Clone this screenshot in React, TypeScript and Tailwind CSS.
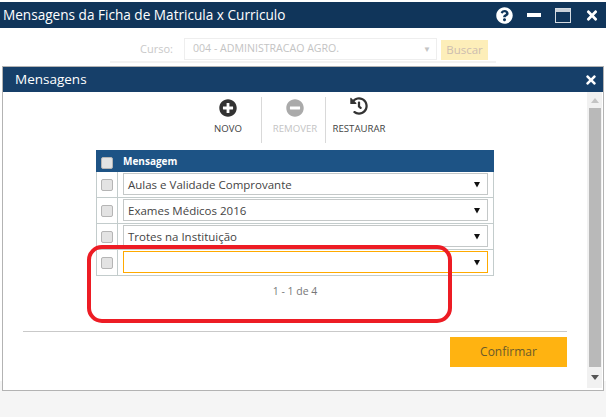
import { FaPlusCircle, FaMinusCircle, FaHistory, FaQuestionCircle, FaTimes } from "react-icons/fa"

const rows = ["Aulas e Validade Comprovante", "Exames Médicos 2016", "Trotes na Instituição", ""]

const Check = () => (
  <span className="block w-[12px] h-[12px] rounded-[2px] border border-[#b5b5b5] bg-[#e3e3e3]" />
)

const Arrow = () => (
  <svg width="8" height="7" viewBox="0 0 8 7" className="shrink-0">
    <path d="M1 1h6L4 6.5z" fill="#111" />
  </svg>
)

const App = () => {
  return (
    <div className="relative w-[606px] h-[417px] overflow-hidden bg-white font-['Open_Sans',sans-serif]">
      <div className="pt-[2px]">
        <div className="h-[26px] bg-[#10355a] flex items-center pl-[3px] pr-[8px] text-white">
          <span className="text-[13.6px] flex-1 whitespace-nowrap">Mensagens da Ficha de Matricula x Curriculo</span>
          <FaQuestionCircle className="w-[17px] h-[17px]" />
          <span className="ml-[14px] w-[14px] h-[4px] bg-white" />
          <svg width="16" height="15" viewBox="0 0 16 15" className="ml-[14px]">
            <rect x="0.5" y="0.5" width="15" height="14" fill="none" stroke="#d5dbe2" />
            <rect x="1" y="1" width="14" height="3" fill="#c9d0d8" />
          </svg>
          <FaTimes className="ml-[15px] w-[12px] h-[15px]" />
        </div>
        <div className="mt-[10px] mx-[110px] h-[25px] border-b-[2px] border-[#f2f2f2] flex items-start">
          <span className="ml-[30px] mt-[3px] w-[44px] text-[11px] text-[#c9c9c9]">Curso:</span>
          <div className="w-[253px] h-[22px] border border-[#eeeeee] flex items-center pl-[8px] pr-[5px] text-[10.6px] text-[#c4c4c4]">
            <span className="flex-1">004 - ADMINISTRACAO AGRO.</span>
            <span className="text-[8px] text-[#c4c4c4]">▼</span>
          </div>
          <div className="ml-[4px] mt-[2px] w-[47px] h-[20px] bg-[#fdeeb9] flex items-center justify-center text-[11.5px] text-[#cdbdb0]">Buscar</div>
        </div>
        <div className="absolute left-0 right-0 top-[381px] bottom-0 bg-[#f5f5f5]" />
      </div>

      {/* modal */}
      <div className="absolute left-[2px] top-[66px] w-[602px] h-[325px] border border-[#b3b3b3] bg-white flex flex-col">
        <div className="h-[25px] bg-[#163f69] flex items-center pl-[12px] pr-[6px] text-white shrink-0">
          <span className="text-[13.5px] flex-1">Mensagens</span>
          <FaTimes className="w-[12px] h-[14px]" />
        </div>
        <div className="flex-1 flex min-h-0">
          <div className="flex-1 flex flex-col">
            <div className="mt-[5px] h-[46px] flex justify-center pr-[6px]">
              <div className="w-[66px] flex flex-col items-center text-[9.6px] text-[#444]">
                <FaPlusCircle className="w-[18px] h-[18px] mt-[2px] text-[#333]" />
                <span className="mt-[5px]">NOVO</span>
              </div>
              <div className="w-[64px] pl-[3px] border-l border-[#d9d9d9] flex flex-col items-center text-[9.6px] text-[#c4c4c4]">
                <FaMinusCircle className="w-[18px] h-[18px] mt-[2px] text-[#aaaaaa]" />
                <span className="mt-[5px] whitespace-nowrap">REMOVER</span>
              </div>
              <div className="w-[64px] pl-[3px] border-l border-[#d9d9d9] flex flex-col items-center text-[9.6px] text-[#444]">
                <FaHistory className="w-[18px] h-[18px] text-[#333]" />
                <span className="mt-[7px] whitespace-nowrap">RESTAURAR</span>
              </div>
            </div>
            <div className="mt-[7px] ml-[93px] w-[398px]">
              <div className="h-[22px] bg-[#1d5385] flex items-center text-white">
                <div className="w-[22px] flex justify-center pt-[4px]"><Check /></div>
                <span className="ml-[5px] text-[10px] font-bold">Mensagem</span>
              </div>
              <div className="border border-t-0 border-[#c3cccc]">
                {rows.map((r, i) => (
                  <div key={i} className="h-[26px] flex items-start border-b border-[#c3cccc] last:border-b-0 last:h-[25px]">
                    <div className="w-[21px] h-full flex items-center justify-center border-r border-[#c3cccc] shrink-0"><Check /></div>
                    <div className={`ml-[5px] mt-[1px] w-[365px] h-[22px] flex items-center pl-[4px] pr-[6px] border ${i === 3 ? "border-[#ffaa00]" : "border-[#c4c8c8]"}`}>
                      <span className="flex-1 pt-[2px] text-[11.5px] text-[#444]">{r}</span>
                      <Arrow />
                    </div>
                  </div>
                ))}
              </div>
              <div className="mt-[8px] text-center text-[10.5px] text-[#777]">1 - 1 de 4</div>
            </div>
            <div className="mt-[31px] ml-[20px] mr-[20px] border-t border-[#c9c9c9]" />
            <div className="mt-[5px] mr-[20px] flex justify-end">
              <button className="w-[117px] h-[30px] bg-[#ffb311] text-[12px] text-[#6b5a2a]">Confirmar</button>
            </div>
          </div>
          <div className="w-[15px] mr-[1px] mb-[2px] bg-[#f1f1f1] flex flex-col items-center shrink-0">
            <div className="h-[16px] flex items-center justify-center">
              <svg width="8" height="5" viewBox="0 0 8 5"><path d="M0 5h8L4 0z" fill="#c4c4c4" /></svg>
            </div>
            <div className="w-[12px] h-[259px] bg-[#b9b9b9]" />
            <div className="flex-1 flex items-center justify-center">
              <svg width="8" height="5" viewBox="0 0 8 5"><path d="M0 0h8L4 5z" fill="#555" /></svg>
            </div>
          </div>
        </div>
      </div>

      {/* red annotation */}
      <div className="absolute left-[87px] top-[245px] w-[365px] h-[78px] border-[4px] border-[#ed1c24] rounded-[15px]" />
    </div>
  )
}

export default App
